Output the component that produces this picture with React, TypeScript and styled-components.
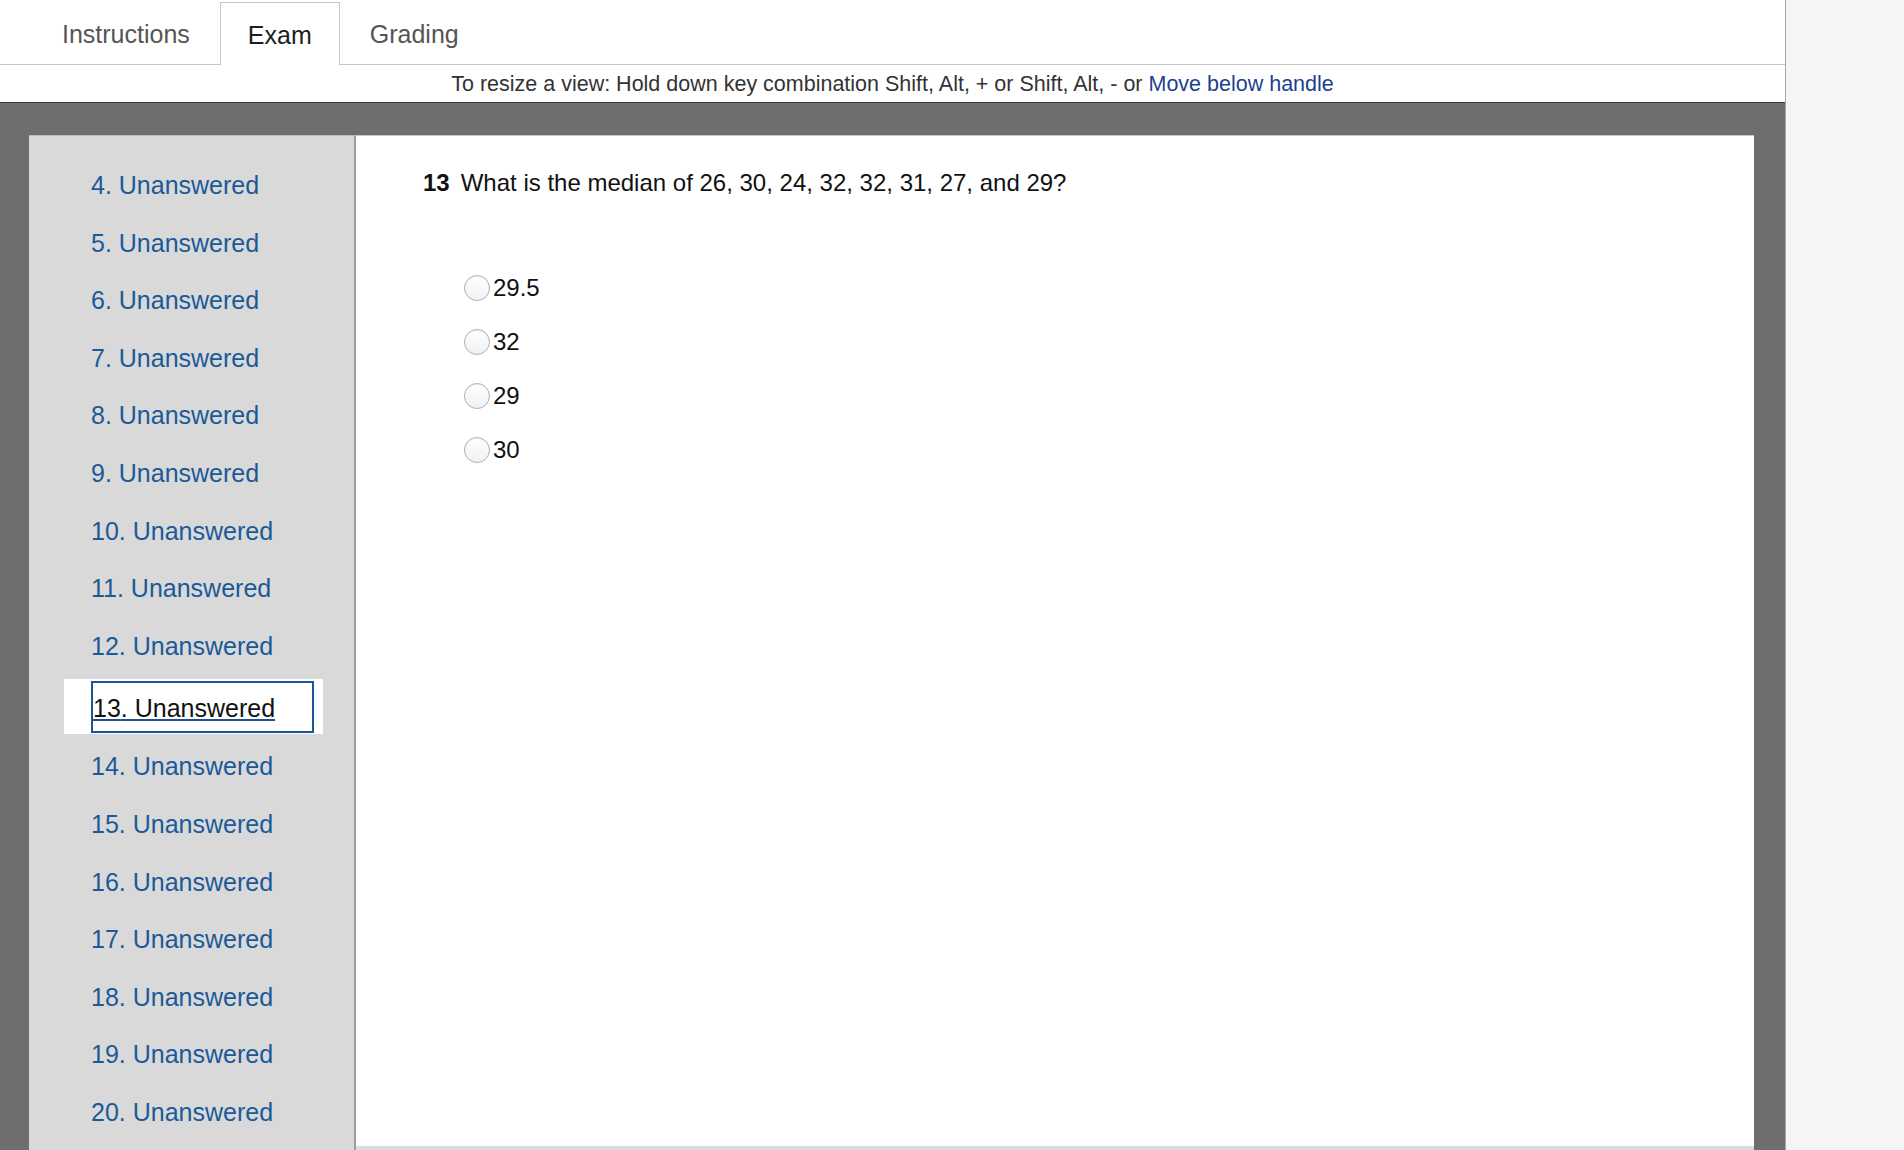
import { useLayoutEffect, useRef } from 'react'
import styled, { createGlobalStyle } from 'styled-components'

const questions = Array.from({ length: 24 }, (_, i) => i + 1)
const current = 13
const options = ['29.5', '32', '29', '30']

export default function App() {
  const listRef = useRef<HTMLDivElement>(null)

  // the question list is scrolled so that item 4 sits at the top
  useLayoutEffect(() => {
    if (listRef.current) listRef.current.scrollTop = 170
  }, [])

  return (
    <>
      <GlobalStyle />
      <Page>
        <TabBar>
          <Tab>Instructions</Tab>
          <Tab $active>Exam</Tab>
          <Tab>Grading</Tab>
        </TabBar>
        <HintBar>
          To resize a view: Hold down key combination Shift, Alt, + or Shift, Alt, - or&nbsp;
          <HintLink href="#">Move below handle</HintLink>
        </HintBar>
        <Workspace>
          <Sidebar ref={listRef}>
            <QuestionList>
              {questions.map((n) => (
                <QuestionItem key={n} $active={n === current}>
                  <QuestionLink href="#" $active={n === current}>
                    {n}. Unanswered
                  </QuestionLink>
                </QuestionItem>
              ))}
            </QuestionList>
          </Sidebar>
          <Content>
            <Question>
              <QNum>13</QNum>What is the median of 26, 30, 24, 32, 32, 31, 27, and 29?
            </Question>
            <Options>
              {options.map((o) => (
                <Option key={o}>
                  <Radio type="radio" name="q13" />
                  {o}
                </Option>
              ))}
            </Options>
          </Content>
        </Workspace>
      </Page>
    </>
  )
}

/**
 * style定義
 */
const GlobalStyle = createGlobalStyle`
  html, body {
    margin: 0;
    padding: 0;
    background: #f5f5f5;
    font-family: "Liberation Sans", Arial, sans-serif;
    overflow: hidden;
  }
`

const Page = styled.div`
  display: flex;
  flex-direction: column;
  width: 1786px;
  height: 1150px;
  box-sizing: border-box;
  background: #fff;
  border-right: 1px solid #a8a8a8;
  overflow: hidden;
`

const TabBar = styled.div`
  display: flex;
  align-items: flex-end;
  gap: 3px;
  height: 65px;
  box-sizing: border-box;
  padding-left: 35px;
  border-bottom: 1px solid #c6c6c6;
`

const Tab = styled.div<{ $active?: boolean }>`
  display: flex;
  align-items: center;
  box-sizing: border-box;
  padding: 2px 27px 0;
  font-size: 25px;
  color: ${({ $active }) => ($active ? '#1e1e1e' : '#555')};
  cursor: pointer;
  ${({ $active }) =>
    $active
      ? `
    height: 63px;
    margin-bottom: -1px;
    background: #fff;
    border: 1px solid #c6c6c6;
    border-bottom: none;
  `
      : `
    height: 62px;
  `}
`

const HintBar = styled.div`
  display: flex;
  align-items: center;
  justify-content: center;
  height: 38px;
  box-sizing: border-box;
  padding-top: 1px;
  font-size: 21.5px;
  color: #333;
  border-bottom: 1px solid #3a3a3a;
`

const HintLink = styled.a`
  color: #1d4190;
  text-decoration: none;
`

const Workspace = styled.div`
  display: flex;
  flex: 1;
  min-height: 0;
  padding: 32px 31px 0 29px;
  background: #6e6e6e;
`

const Sidebar = styled.div`
  width: 327px;
  flex-shrink: 0;
  box-sizing: border-box;
  background: #d9d9d9;
  border-top: 1px solid #bdbdbd;
  border-right: 2px solid #9c9c9c;
  overflow: hidden;
`

const QuestionList = styled.div`
  display: flex;
  flex-direction: column;
  padding: 18px 0 40px 35px;
`

const QuestionItem = styled.div<{ $active?: boolean }>`
  display: flex;
  align-items: center;
  width: 259px;
  box-sizing: border-box;
  padding: 0 9px 0 27px;
  height: ${({ $active }) => ($active ? '55px' : '57.6px')};
  margin: ${({ $active }) => ($active ? '4px 0' : '0')};
  background: ${({ $active }) => ($active ? '#fff' : 'transparent')};
`

const QuestionLink = styled.a<{ $active?: boolean }>`
  display: block;
  width: 223px;
  box-sizing: border-box;
  font-size: 25px;
  white-space: nowrap;
  color: ${({ $active }) => ($active ? '#111' : '#1b5a98')};
  text-decoration: ${({ $active }) => ($active ? 'underline' : 'none')};
  text-decoration-color: #1b5597;
  text-underline-offset: 2px;
  ${({ $active }) =>
    $active &&
    `
    height: 52px;
    line-height: 50px;
    border: 2px solid #1b5597;
  `}
`

const Content = styled.div`
  flex: 1;
  box-sizing: border-box;
  background: #fff;
  border-top: 1px solid #c8c8c8;
  border-bottom: 4px solid #dcdcdc;
  padding: 33px 0 0 67px;
`

const Question = styled.div`
  font-size: 24px;
  line-height: 28px;
  color: #111;
`

const QNum = styled.span`
  font-weight: bold;
  margin-right: 11px;
`

const Options = styled.div`
  display: flex;
  flex-direction: column;
  margin-top: 64px;
  padding-left: 41px;
`

const Option = styled.label`
  display: flex;
  align-items: center;
  gap: 3px;
  height: 54px;
  font-size: 24px;
  color: #111;
`

const Radio = styled.input`
  appearance: none;
  margin: 0;
  width: 26px;
  height: 26px;
  border-radius: 50%;
  border: 1px solid #b0b0b0;
  background: linear-gradient(#ffffff, #f1f1f1);
  box-shadow: inset 0 1px 1px rgba(0, 0, 0, 0.06);
`
